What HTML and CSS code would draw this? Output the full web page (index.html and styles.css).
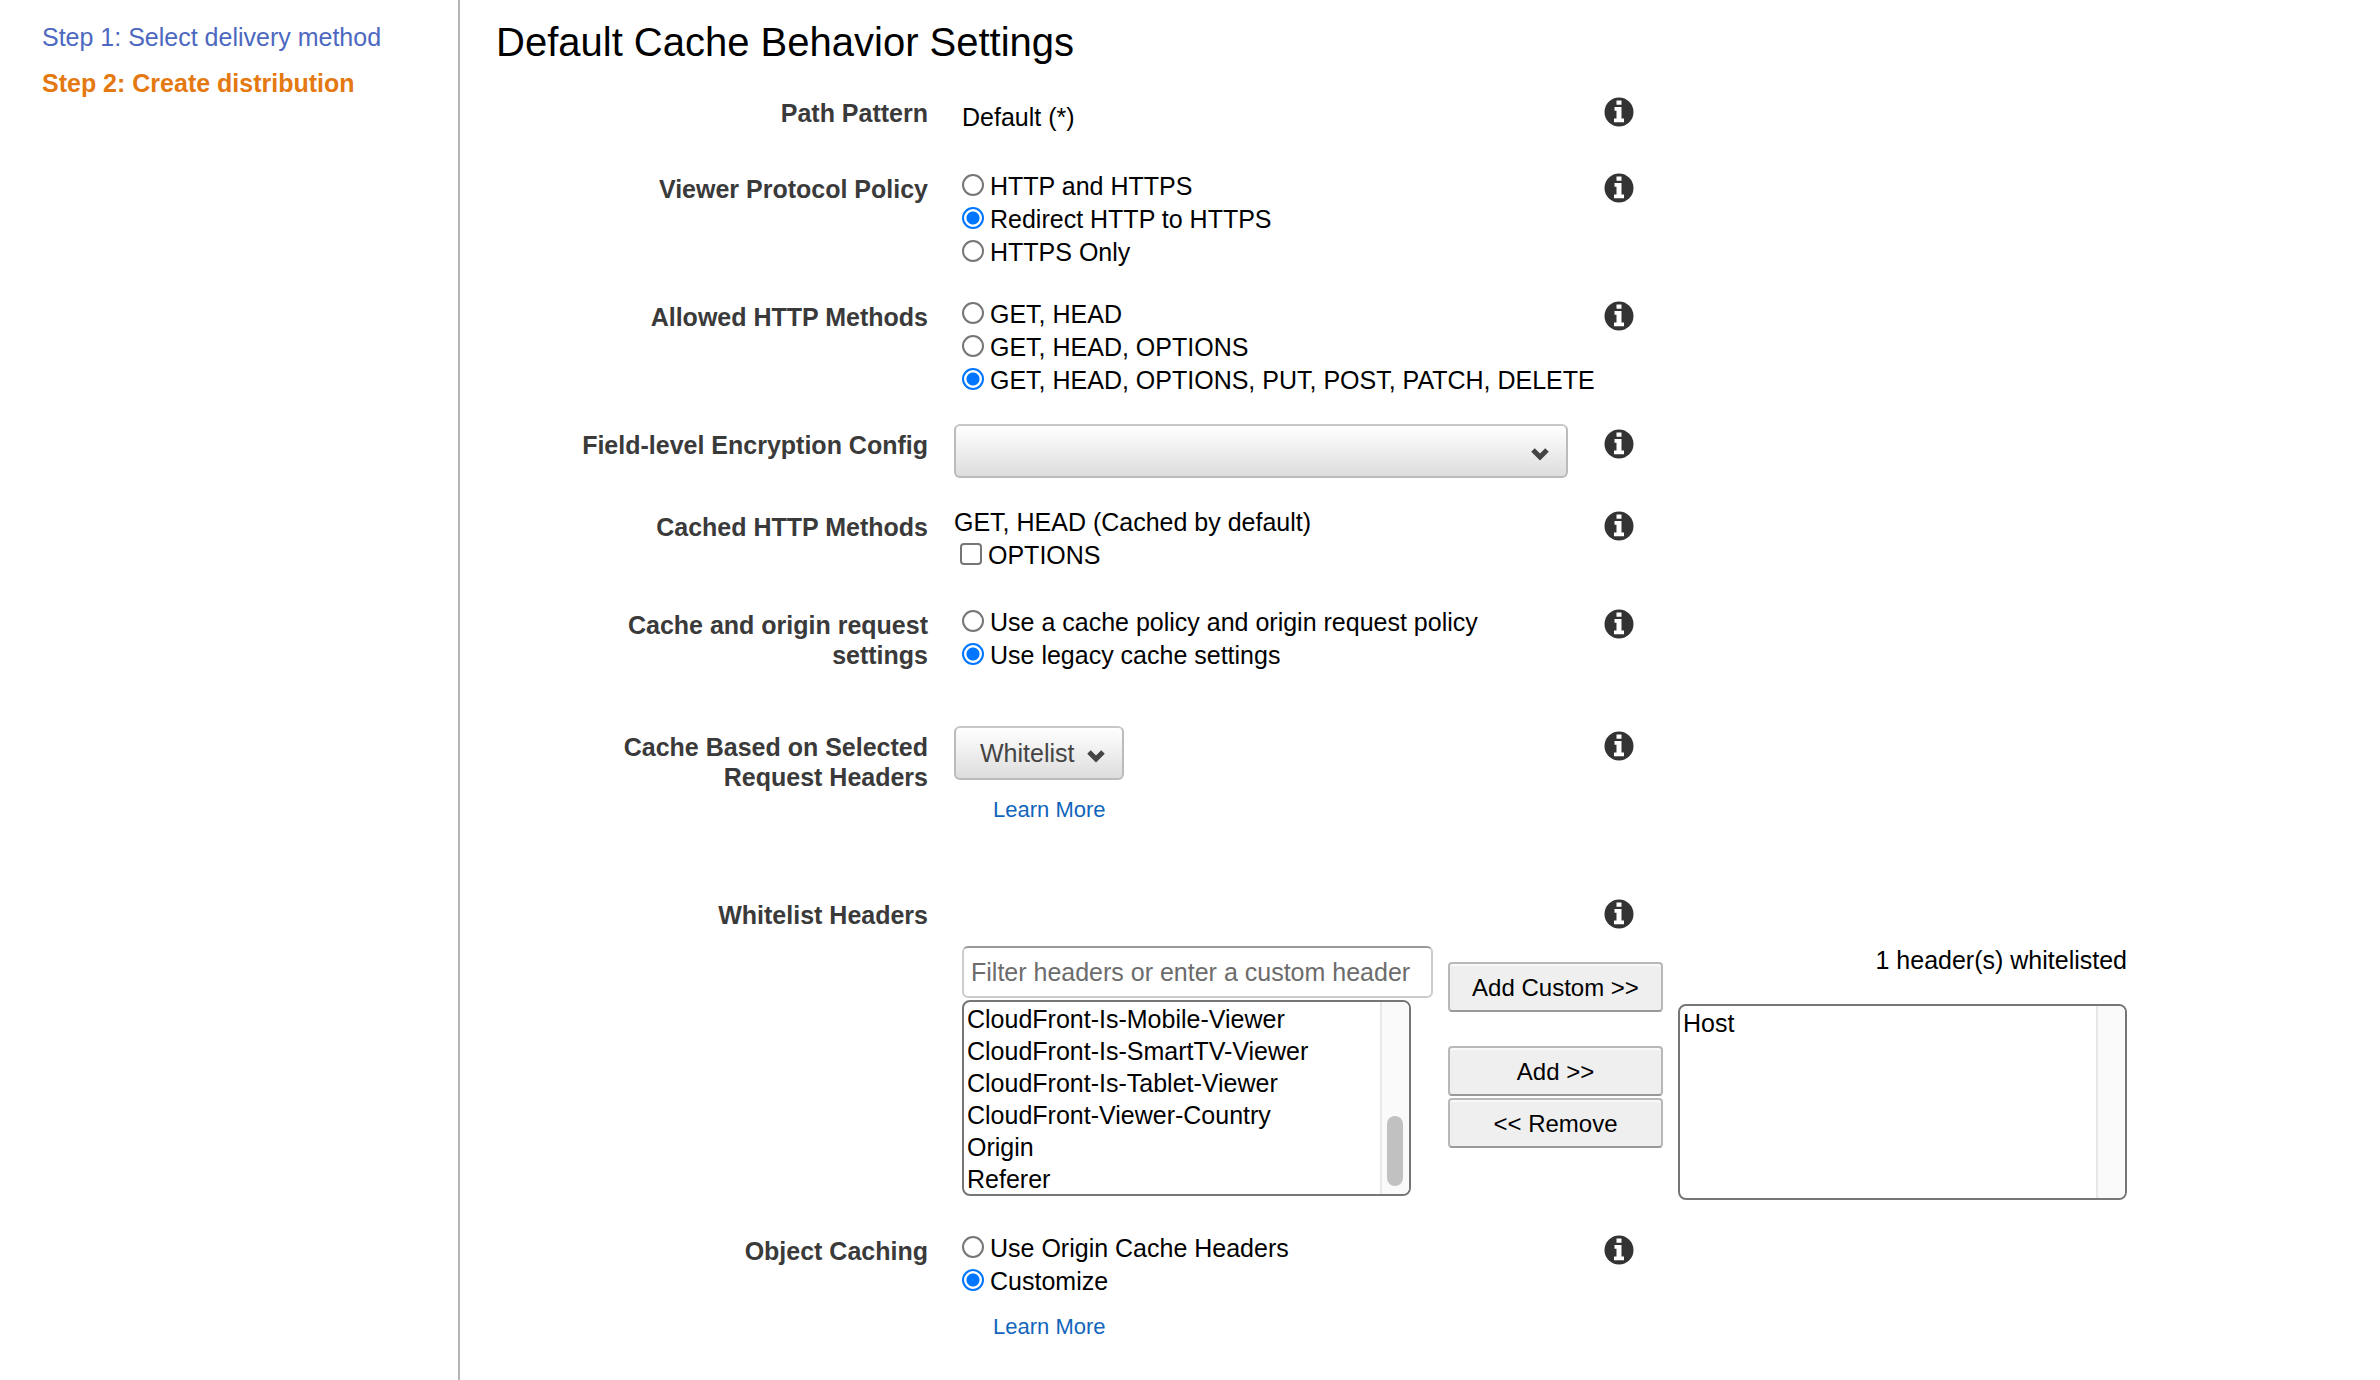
FILE: index.html
```html
<!DOCTYPE html>
<html lang="en">
<head>
<meta charset="utf-8">
<title>Create distribution</title>
<link rel="stylesheet" href="styles.css">
</head>
<body>
<svg class="sprite" aria-hidden="true">
  <symbol id="info" viewBox="0 0 30 30">
    <circle cx="15" cy="15" r="14.5" fill="#333"/>
    <path fill="#fff" d="M12.5 3.5h5v4.2h-5zM10.5 10h7v11.5h2.5v3.8h-10v-3.8h2.5v-7.7h-2z"/>
  </symbol>
</svg>
<div class="page">
  <nav class="steps">
    <a class="step" href="#step1">Step 1: Select delivery method</a>
    <a class="step current" href="#step2" aria-current="step">Step 2: Create distribution</a>
  </nav>
  <main class="main">
    <h1>Default Cache Behavior Settings</h1>
    <form class="settings">
      <div class="row path">
        <span class="name">Path Pattern</span>
        <span class="value">Default (*)</span>
        <button type="button" class="info" aria-label="About path pattern"><svg><use href="#info"/></svg></button>
      </div>
      <div class="row" role="radiogroup" aria-labelledby="vpp">
        <span class="name" id="vpp">Viewer Protocol Policy</span>
        <div class="choices">
          <label><input type="radio" name="vpp">HTTP and HTTPS</label>
          <label><input type="radio" name="vpp" checked>Redirect HTTP to HTTPS</label>
          <label><input type="radio" name="vpp">HTTPS Only</label>
        </div>
        <button type="button" class="info" aria-label="About viewer protocol policy"><svg><use href="#info"/></svg></button>
      </div>
      <div class="row" role="radiogroup" aria-labelledby="methods">
        <span class="name" id="methods">Allowed HTTP Methods</span>
        <div class="choices">
          <label><input type="radio" name="methods">GET, HEAD</label>
          <label><input type="radio" name="methods">GET, HEAD, OPTIONS</label>
          <label><input type="radio" name="methods" checked>GET, HEAD, OPTIONS, PUT, POST, PATCH, DELETE</label>
        </div>
        <button type="button" class="info" aria-label="About allowed HTTP methods"><svg><use href="#info"/></svg></button>
      </div>
      <div class="row encryption">
        <label class="name" for="fle">Field-level Encryption Config</label>
        <div class="drop wide">
          <select id="fle"><option></option></select>
          <svg class="chevron" viewBox="0 0 20 14"><path d="M3 3l7 7 7-7"/></svg>
        </div>
        <button type="button" class="info" aria-label="About field-level encryption"><svg><use href="#info"/></svg></button>
      </div>
      <div class="row cached">
        <span class="name">Cached HTTP Methods</span>
        <div class="cached-methods">
          <span>GET, HEAD (Cached by default)</span>
          <label><input type="checkbox">OPTIONS</label>
        </div>
        <button type="button" class="info" aria-label="About cached HTTP methods"><svg><use href="#info"/></svg></button>
      </div>
      <div class="row policy" role="radiogroup" aria-labelledby="policy">
        <span class="name" id="policy">Cache and origin request settings</span>
        <div class="choices">
          <label><input type="radio" name="policy">Use a cache policy and origin request policy</label>
          <label><input type="radio" name="policy" checked>Use legacy cache settings</label>
        </div>
        <button type="button" class="info" aria-label="About cache and origin request settings"><svg><use href="#info"/></svg></button>
      </div>
      <div class="row based">
        <label class="name" for="based">Cache Based on Selected Request Headers</label>
        <div class="stack">
          <div class="drop">
            <select id="based"><option>Whitelist</option></select>
            <svg class="chevron" viewBox="0 0 20 14"><path d="M3 3l7 7 7-7"/></svg>
          </div>
          <a class="more" href="#headers">Learn More</a>
        </div>
        <button type="button" class="info" aria-label="About request headers"><svg><use href="#info"/></svg></button>
      </div>
      <div class="row whitelist">
        <label class="name" for="headers">Whitelist Headers</label>
        <button type="button" class="info" aria-label="About whitelist headers"><svg><use href="#info"/></svg></button>
        <div class="picker">
          <div class="available">
            <input type="text" class="filter" placeholder="Filter headers or enter a custom header" aria-label="Filter headers">
            <div class="listbox">
              <select id="headers" size="6" multiple>
                <option>CloudFront-Is-Mobile-Viewer</option>
                <option>CloudFront-Is-SmartTV-Viewer</option>
                <option>CloudFront-Is-Tablet-Viewer</option>
                <option>CloudFront-Viewer-Country</option>
                <option>Origin</option>
                <option>Referer</option>
              </select>
              <span class="track"><span class="thumb"></span></span>
            </div>
          </div>
          <div class="transfer">
            <button type="button" class="custom">Add Custom &gt;&gt;</button>
            <button type="button">Add &gt;&gt;</button>
            <button type="button">&lt;&lt; Remove</button>
          </div>
          <div class="chosen">
            <label for="chosen">1 header(s) whitelisted</label>
            <div class="listbox">
              <select id="chosen" size="6" multiple><option>Host</option></select>
              <span class="track"></span>
            </div>
          </div>
        </div>
      </div>
      <div class="row" role="radiogroup" aria-labelledby="caching">
        <span class="name" id="caching">Object Caching</span>
        <div class="choices">
          <label><input type="radio" name="caching">Use Origin Cache Headers</label>
          <label><input type="radio" name="caching" checked>Customize</label>
          <a class="more" href="#caching">Learn More</a>
        </div>
        <button type="button" class="info" aria-label="About object caching"><svg><use href="#info"/></svg></button>
      </div>
    </form>
  </main>
</div>
</body>
</html>
```
FILE: styles.css
```css
* { box-sizing: border-box; }
body {
  margin: 0;
  background: #fff;
  color: #000;
  font: 25px/33px "Liberation Sans", Arial, sans-serif;
}
button, input, select { font: inherit; color: inherit; margin: 0; }
a { text-decoration: none; }
.sprite { position: absolute; width: 0; height: 0; }

.page { display: flex; min-height: 100vh; }
.steps {
  flex: 0 0 460px;
  display: flex;
  flex-direction: column;
  gap: 13px;
  padding: 21px 42px;
  border-right: 2px solid #b3b5b6;
}
.step { color: #4d68c0; }
.step.current { color: #e47911; font-weight: bold; }

.main { flex: 1; padding: 18px 36px 0; }
h1 { margin: 0 0 26px; font-size: 40px; line-height: 48px; font-weight: normal; }

.row {
  display: grid;
  grid-template-columns: 458px 650px 30px 1fr;
  align-items: start;
  padding-bottom: 27px;
}
.name {
  padding: 6px 26px 0 60px;
  color: #3a3a3a;
  line-height: 30px;
  font-weight: bold;
  text-align: right;
}
.value { padding: 9px 0 0 8px; }
.info { margin-top: 5px; padding: 0; border: 0; background: none; width: 30px; height: 30px; }
.info svg { display: block; width: 30px; height: 30px; }

.path { padding-bottom: 34px; }
.encryption { padding-bottom: 28px; }
.cached { padding-bottom: 32px; }
.policy { padding-bottom: 54px; }
.based { padding-bottom: 68px; }
.whitelist { padding-bottom: 30px; row-gap: 16px; }

.choices { display: flex; flex-direction: column; align-items: flex-start; padding: 2px 0 0 8px; }
.choices label, .cached-methods label { display: flex; align-items: center; gap: 6px; }
input[type="radio"], input[type="checkbox"] {
  appearance: none;
  width: 22px;
  height: 22px;
  border: 2px solid #767676;
  background: #fff;
}
input[type="radio"] { border-radius: 50%; margin-bottom: 4px; }
input[type="radio"]:checked {
  border-color: #0075ff;
  background: radial-gradient(circle, #0075ff 6px, #fff 7px);
}
input[type="checkbox"] { border-radius: 4px; margin-bottom: 4px; }
.cached-methods { display: flex; flex-direction: column; align-items: flex-start; }
.cached-methods label { padding-left: 6px; }

.drop { position: relative; }
.drop select {
  appearance: none;
  display: block;
  height: 54px;
  width: 170px;
  padding: 0 24px;
  border: 2px solid #bbb;
  border-top-color: #c8c8c8;
  border-radius: 6px;
  background: linear-gradient(#fff, #ddd);
  color: #444;
}
.drop.wide { width: 614px; }
.drop.wide select { width: 100%; }
.drop .chevron { position: absolute; right: 18px; top: 23px; width: 20px; height: 14px; }
.chevron path { fill: none; stroke: #444; stroke-width: 5; }
.stack { display: flex; flex-direction: column; align-items: flex-start; gap: 13px; }
.more { padding-left: 39px; color: #1166bb; font-size: 22px; line-height: 33px; }
.choices .more { padding-left: 31px; margin-top: 12px; }

.whitelist .info { grid-column: 3; }
.picker { grid-column: 2 / -1; display: flex; align-items: flex-start; gap: 15px; padding-left: 8px; }
.available { display: flex; flex-direction: column; gap: 2px; width: 471px; }
.filter {
  height: 52px;
  padding: 0 7px;
  border: 2px solid #ccc;
  border-top-color: #999;
  border-radius: 6px;
  background: #fff;
}
.filter::placeholder { color: #6c6c6c; opacity: 1; }
.listbox { position: relative; width: 449px; }
.listbox select {
  display: block;
  width: 100%;
  height: 196px;
  padding: 0;
  border: 2px solid #767676;
  border-radius: 8px;
  background: #fff;
  overflow: hidden;
}
.listbox option { height: 32px; min-height: 32px; padding: 3px 3px 0; line-height: 29px; }
.track {
  position: absolute;
  top: 2px;
  right: 2px;
  bottom: 2px;
  width: 29px;
  padding: 114px 5px 0 5px;
  border-left: 2px solid #e8e8e8;
  border-radius: 0 6px 6px 0;
  background: #fafafa;
}
.thumb { display: block; width: 16px; height: 70px; border-radius: 8px; background: #c1c1c1; }

.transfer { display: flex; flex-direction: column; gap: 2px; width: 215px; padding-top: 16px; }
.transfer button {
  height: 50px;
  border: 2px solid #b8b8b8;
  border-bottom-color: #999;
  border-radius: 4px;
  background: #efefef;
  box-shadow: inset 0 2px 0 #f9f9f9;
  font-size: 24px;
}
.transfer .custom { margin-bottom: 32px; }
.chosen { display: flex; flex-direction: column; gap: 30px; text-align: right; }
.chosen label { line-height: 28px; }
```
